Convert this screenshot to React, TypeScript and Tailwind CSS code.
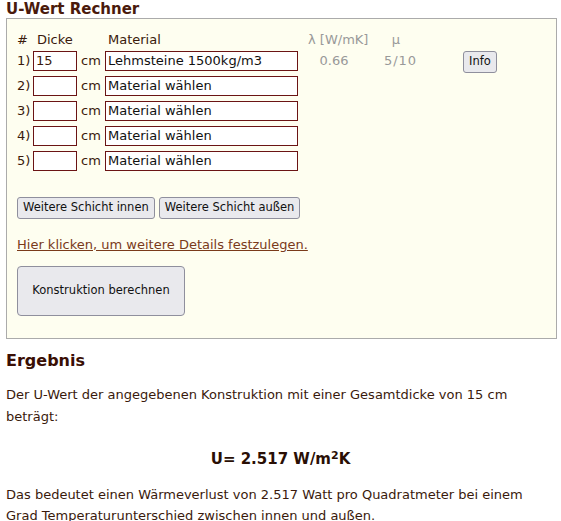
const rows = [
  { n: "1)", dicke: "15", material: "Lehmsteine 1500kg/m3", lambda: "0.66", mu: "5/10" },
  { n: "2)", dicke: "", material: "Material wählen" },
  { n: "3)", dicke: "", material: "Material wählen" },
  { n: "4)", dicke: "", material: "Material wählen" },
  { n: "5)", dicke: "", material: "Material wählen" },
];

const btn =
  "h-[22px] rounded-[3px] border border-[#8f8f9d] bg-[#e9e9ed] text-[11.5px] leading-none text-[#111]";

export default function App() {
  return (
    <div className="w-[561px] min-h-[521px] bg-white font-['DejaVu_Sans',Verdana,sans-serif] text-[#3a1a0c]">
      <h2 className="pl-[6px] text-[15px] font-bold leading-[18px] text-[#4a1a0c]">U-Wert Rechner</h2>

      <div className="ml-[6px] h-[321px] w-[551px] border border-[#ababab] bg-[#fefef0] pl-[10px] pt-[12px]">
        {/* header */}
        <div className="flex h-[18px] items-center text-[13px] text-[#3a1a0c]">
          <span className="w-[20px]">#</span>
          <span className="w-[71px]">Dicke</span>
          <span className="w-[200px]">Material</span>
          <span className="w-[62px] text-[#999]">λ [W/mK]</span>
          <span className="w-[52px] text-center text-[#999]">µ</span>
        </div>

        <div className="mt-[2px] flex flex-col gap-[5px]">
          {rows.map((r) => (
            <div key={r.n} className="flex h-[20px] items-center text-[13px]">
              <span className="w-[16px]">{r.n}</span>
              <div className="h-[20px] w-[44px] border border-[#6b1414] bg-white px-[2px] leading-[18px]">{r.dicke}</div>
              <span className="w-[28px] pl-[4px]">cm</span>
              <div className="h-[20px] w-[193px] border border-[#6b1414] bg-white px-[2px] leading-[18px] text-[#111]">
                {r.material}
              </div>
              <span className="w-[70px] pl-[2px] text-center text-[#999]">{r.lambda ?? ""}</span>
              <span className="w-[65px] text-center tracking-[1px] text-[#999]">{r.mu ?? ""}</span>
              {r.lambda && <button className={`${btn} ml-[30px] mt-[2px] px-[5px]`}>Info</button>}
            </div>
          ))}
        </div>

        <div className="mt-[26px] flex gap-[4px]">
          <button className={`${btn} px-[5px]`}>Weitere Schicht innen</button>
          <button className={`${btn} px-[5px]`}>Weitere Schicht außen</button>
        </div>

        <a href="#" className="mt-[18px] block text-[13px] leading-[16px] text-[#7a3a1a] underline">
          Hier klicken, um weitere Details festzulegen.
        </a>

        <button className="mt-[13px] h-[50px] w-[168px] rounded-[4px] border border-[#8f8f9d] bg-[#e9e9ed] text-[11.5px] text-[#111]">
          Konstruktion berechnen
        </button>
      </div>

      <div className="px-[6px]">
        <h2 className="mt-[11px] text-[16px] font-bold leading-[22px] text-[#3a0f05]">Ergebnis</h2>
        <p className="mt-[12px] w-[520px] text-[13px] leading-[22px]">
          Der U-Wert der angegebenen Konstruktion mit einer Gesamtdicke von 15 cm beträgt:
        </p>
        <p className="mt-[20px] text-center text-[15px] font-bold leading-[22px] text-[#2a0f05]">
          U= 2.517 W/m<sup className="text-[11px]">2</sup>K
        </p>
        <p className="mt-[14px] w-[520px] text-[13px] leading-[21px]">
          Das bedeutet einen Wärmeverlust von 2.517 Watt pro Quadratmeter bei einem Grad Temperaturunterschied
          zwischen innen und außen.
        </p>
      </div>
    </div>
  );
}
